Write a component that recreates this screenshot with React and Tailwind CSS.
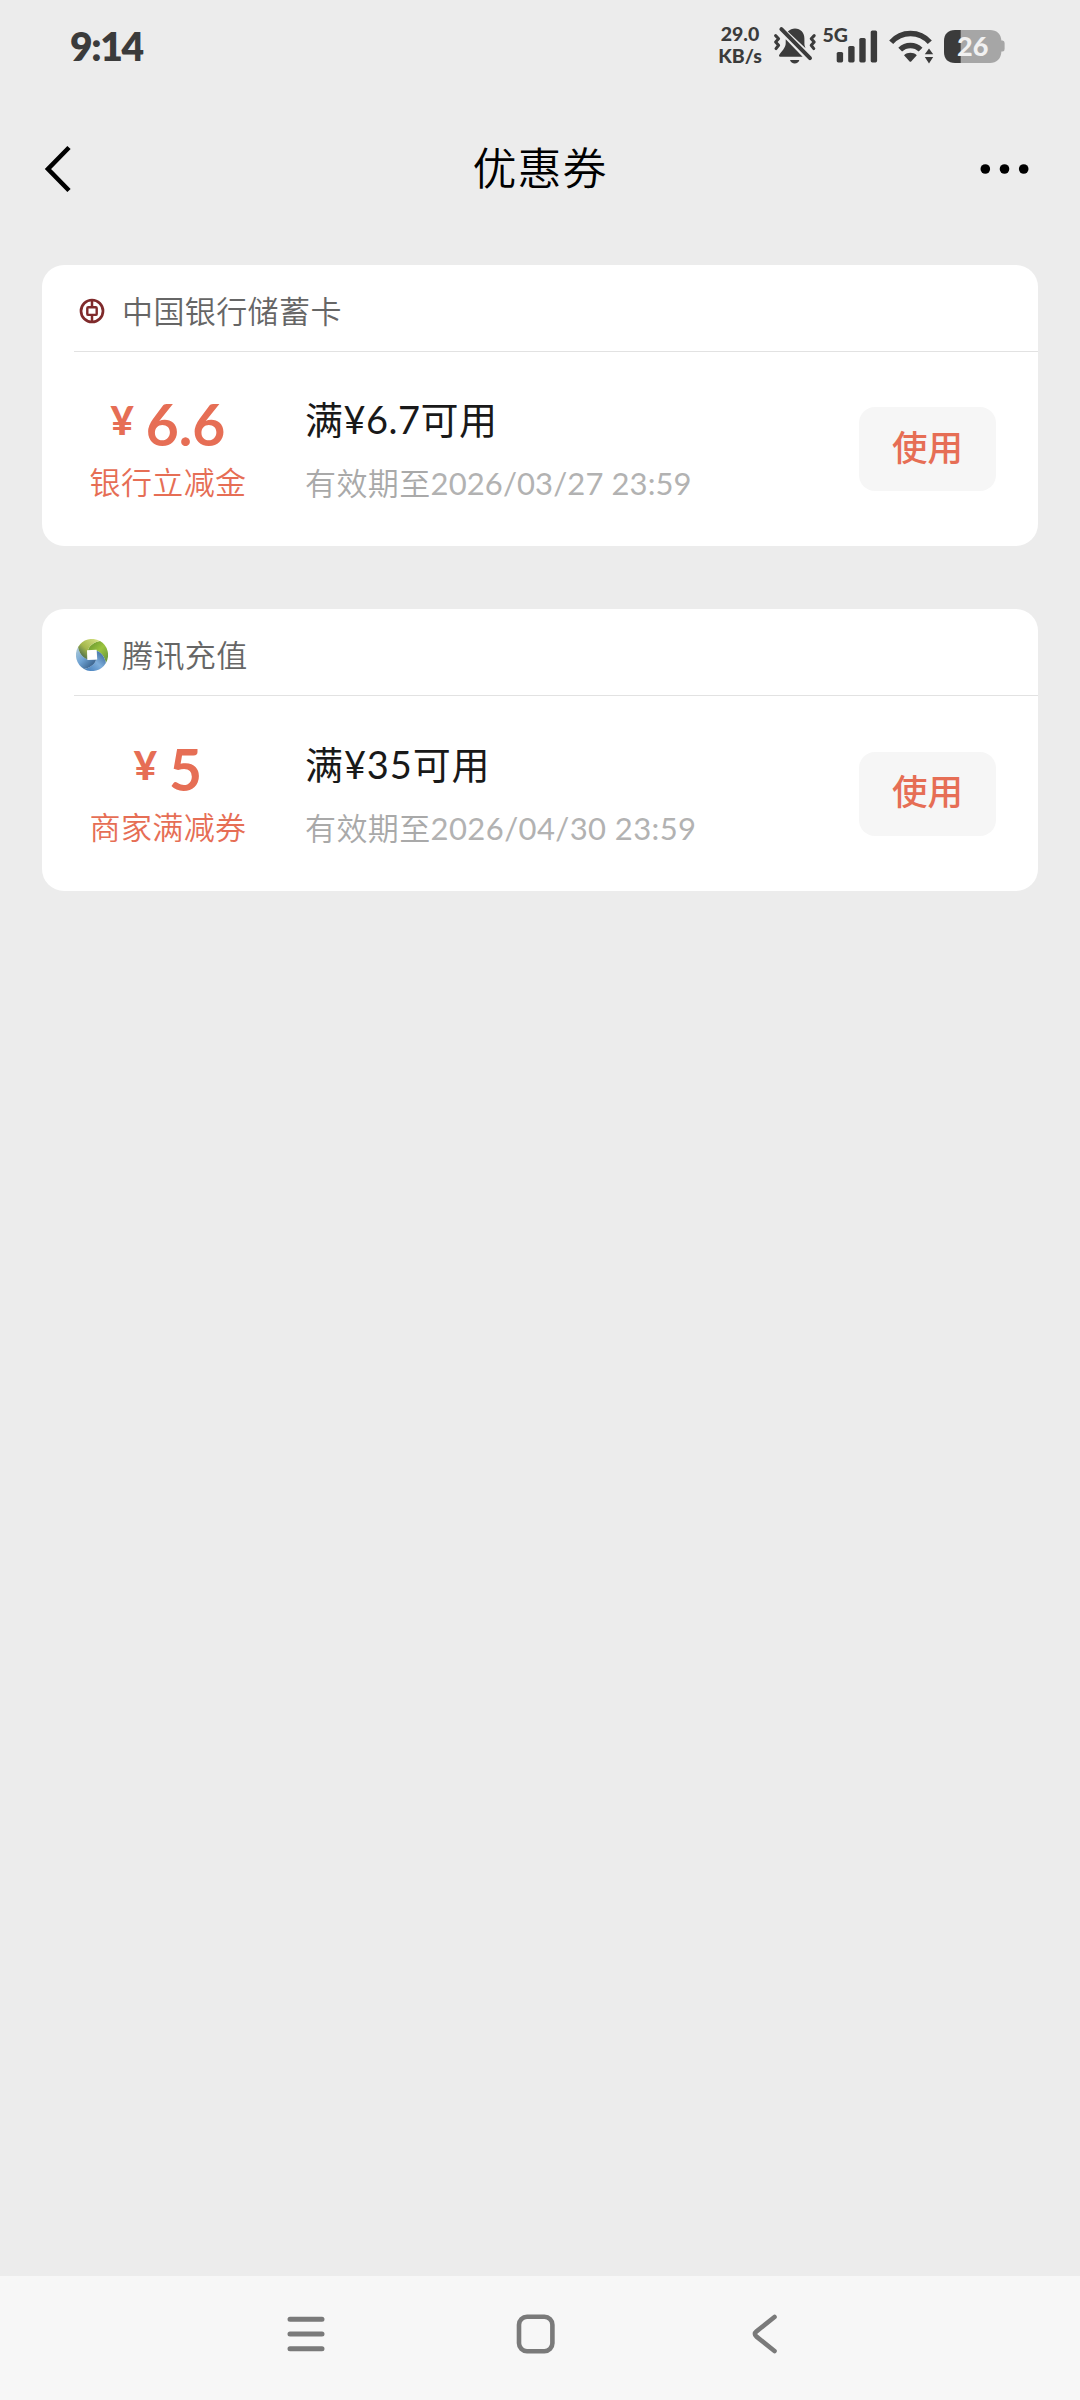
function BankIcon() {
  return (
    <svg className="h-8 w-8" viewBox="0 0 32 32" fill="none" stroke="#7f2a2b">
      <circle cx="16" cy="16" r="11" strokeWidth="2.7" />
      <rect x="11.3" y="12.3" width="9.4" height="7.6" rx="1" strokeWidth="2.4" />
      <path d="M16 5v7.3M16 19.9v7" strokeWidth="2.5" />
    </svg>
  );
}

function RechargeIcon() {
  const blade = "M-4.2-4.2C-3.2-9 2-13 8-13.9A16 16 0 0 1 13.9 8C13 2 9-3 4.2-4.2Z";
  return (
    <svg className="h-8 w-8" viewBox="-16 -16 32 32">
      <defs>
        <linearGradient id="leaf" x1="0" y1="0" x2="1" y2="1">
          <stop offset="0" stopColor="#5f8f2a" />
          <stop offset="0.5" stopColor="#9cc43f" />
          <stop offset="1" stopColor="#5d8f3a" />
        </linearGradient>
        <linearGradient id="sky" x1="0" y1="0" x2="1" y2="1">
          <stop offset="0" stopColor="#2c5a8c" />
          <stop offset="0.5" stopColor="#7eaedb" />
          <stop offset="1" stopColor="#3c78b8" />
        </linearGradient>
        <linearGradient id="deep" x1="0" y1="0" x2="1" y2="1">
          <stop offset="0" stopColor="#24486f" />
          <stop offset="0.55" stopColor="#6fa3d4" />
          <stop offset="1" stopColor="#b4cfd8" />
        </linearGradient>
        <linearGradient id="lime" x1="0" y1="0" x2="1" y2="1">
          <stop offset="0" stopColor="#234a4c" />
          <stop offset="0.45" stopColor="#a5b84c" />
          <stop offset="1" stopColor="#dbe68a" />
        </linearGradient>
      </defs>
      <path d={blade} fill="url(#leaf)" />
      <path d={blade} fill="url(#sky)" transform="rotate(90)" />
      <path d={blade} fill="url(#deep)" transform="rotate(180)" />
      <path d={blade} fill="url(#lime)" transform="rotate(270)" />
      <path d="M-5-4.8L4.6-5.2L5.2 4.4L-4.6 5Z" fill="#fff" />
    </svg>
  );
}

const coupons = [
  {
    icon: BankIcon,
    source: "中国银行储蓄卡",
    amount: "6.6",
    kind: "银行立减金",
    title: "满¥6.7可用",
    expiry: "2026/03/27 23:59",
    size: "h-[281px]",
    titleSpacing: "tracking-[0.5px]",
    dateSpacing: "tracking-[0.1px]",
  },
  {
    icon: RechargeIcon,
    source: "腾讯充值",
    amount: "5",
    kind: "商家满减券",
    title: "满¥35可用",
    expiry: "2026/04/30 23:59",
    size: "h-[282px]",
    titleSpacing: "tracking-[0.9px]",
    dateSpacing: "tracking-[0.4px]",
  },
];

function Coupon({ icon: Icon, source, amount, kind, title, expiry, size, titleSpacing, dateSpacing }) {
  return (
    <section className={`flex flex-col rounded-[22px] bg-white ${size}`}>
      <header className="ml-8 flex h-[87px] items-center border-b-[1.5px] border-[#e2e2e2] pl-0.5 pt-1.5">
        <Icon />
        <span className="ml-3.5 text-[31px] font-[350] leading-10 tracking-[0.4px] text-[#666666]">{source}</span>
      </header>
      <div className="flex flex-1 items-center pr-[42px]">
        <div className="flex w-[252px] flex-col items-center text-[#e66e55]">
          <div className="flex h-[66px] items-start font-bold">
            <span className="mr-3 text-[40px] font-black leading-[48px]">¥</span>
            <span className="text-[57px] leading-[56px]">{amount}</span>
          </div>
          <span className="text-[31px] font-[350] leading-10 tracking-[0.4px]">{kind}</span>
        </div>
        <div className="ml-[11px] flex flex-1 flex-col">
          <span className={`text-[38px] leading-[54px] text-[#191919] ${titleSpacing}`}>{title}</span>
          <span className="mt-[14px] text-[31px] leading-[46px] tracking-[0.4px] text-[#b2b2b2]">
            <span className="font-[350] text-[#a9a9a9]">有效期至</span>
            <span className={dateSpacing}>{expiry}</span>
          </span>
        </div>
        <button className="h-[84px] w-[137px] rounded-2xl bg-[#f6f6f6] pb-[3px] text-[35.5px] font-medium text-[#e66e55]">
          使用
        </button>
      </div>
    </section>
  );
}

function StatusIcons() {
  return (
    <svg width="236" height="52" viewBox="770 19 236 52" fill="#3b3b3b">
      {/* muted bell */}
      <path d="M787.8 30.6C790 28.6 792.4 27.6 795 27.6C800.6 27.6 804.4 31.8 804.4 37.5V42.6C804.4 44.3 804.8 45.6 805.6 47.2Z" />
      <path d="M785.7 38.2L802.6 55.8H780.4C778.8 55.8 778.6 54.4 779.6 53.2C783.4 48.6 785.7 45.6 785.7 42.2Z" />
      <path d="M790 59H799.4C798.8 61.2 797 62.4 794.7 62.4S790.6 61.2 790 59Z" />
      <path d="M781.4 28.2L810 57.2" stroke="#3b3b3b" strokeWidth="4" strokeLinecap="round" />
      <path d="M775.6 34.6L778.6 37.8L775.6 41L778.6 44.3L776 47.6M814.2 34.6L811.2 37.8L814.2 41L811.2 44.3L813.8 47.6" fill="none" stroke="#3b3b3b" strokeWidth="3" strokeLinecap="round" strokeLinejoin="round" />
      {/* cellular */}
      <text x="822.4" y="40.8" fontSize="19.5" fontWeight="900">5G</text>
      <rect x="836.7" y="51" width="6.4" height="10.4" rx="1.6" />
      <rect x="848.2" y="45" width="6.4" height="16.4" rx="1.6" />
      <rect x="859.3" y="37" width="6.4" height="24.4" rx="1.6" />
      <rect x="870.7" y="29.4" width="6.4" height="32" rx="1.6" />
      {/* wifi */}
      <path d="M891.2 41.3A25.6 25.6 0 0 1 929.8 41.3M900.2 48.6A14.6 14.6 0 0 1 920.6 48.6" fill="none" stroke="#3b3b3b" strokeWidth="5.4" />
      <path d="M904 54.2C907.6 51 913.2 51 916.8 54.2L911.4 60.2Q910.4 61.2 909.4 60.2Z" />
      <path d="M929 47.4L933.2 53.2H924.8ZM929 62.6L933.2 56H924.8Z" />
      {/* battery */}
      <path d="M955 29H990C996.6 29 1001 33 1001.4 39.5H1002.5Q1004.6 39.5 1004.6 42V48Q1004.6 50.5 1002.5 50.5H1001.4C1001 58 996.6 62 990 62H955Z" fill="#a6a6a6" />
      <path d="M960.7 29V62H955C948 62 944 58 944 51V40C944 33 948 29 955 29Z" />
      <text x="957" y="55.4" fontSize="27" fontWeight="900" fill="#f1f1f1">26</text>
    </svg>
  );
}

function StatusBar() {
  return (
    <div className="flex h-[92px] items-center pl-[70px] pr-[74px] text-[#3b3b3b]">
      <span className="text-[39px] font-extrabold tracking-[-1.4px]">9:14</span>
      <div className="ml-auto flex h-[52px] items-center">
        <div className="mr-[7px] flex w-[46px] flex-col items-center pb-[3px] text-[19.5px] font-black leading-[22px]">
          <span>29.0</span>
          <span>KB/s</span>
        </div>
        <StatusIcons />
      </div>
    </div>
  );
}

export default function App() {
  return (
    <div className="flex h-[2400px] w-[1080px] flex-col bg-[#ececec] font-[Lato,'Noto_Sans_CJK_SC',sans-serif] font-normal">
      <StatusBar />
      <nav className="flex h-[153px] items-center justify-between px-[42px] text-black">
        <svg width="60" height="52" viewBox="0 0 60 52" fill="none" stroke="currentColor" strokeWidth="4.6">
          <path d="M27 4.5L6 26L27 47.5" />
        </svg>
        <h1 className="pb-[2px] text-[44px] font-[350] tracking-[1px]">优惠券</h1>
        <svg width="60" height="12" viewBox="0 0 60 12">
          <circle cx="7.3" cy="6" r="4.8" />
          <circle cx="26.5" cy="6" r="4.8" />
          <circle cx="45.7" cy="6" r="4.8" />
        </svg>
      </nav>
      <main className="mt-5 flex flex-1 flex-col gap-[63px] px-[42px]">
        {coupons.map((c) => (
          <Coupon key={c.source} {...c} />
        ))}
      </main>
      <footer className="flex h-[124px] items-center justify-center gap-[185px] bg-[#f7f7f7] pb-2 pr-2.5 text-[#7a7a7a]">
        <svg width="44" height="44" viewBox="0 0 44 44" fill="none" stroke="currentColor" strokeWidth="5" strokeLinecap="round">
          <path d="M6 7.3H38M6 22H38M6 36.7H38" />
        </svg>
        <svg width="44" height="44" viewBox="0 0 44 44" fill="none" stroke="currentColor" strokeWidth="4.6">
          <rect x="6" y="4.8" width="33.4" height="34.4" rx="8" />
        </svg>
        <svg width="44" height="44" viewBox="0 0 44 44" fill="none" stroke="currentColor" strokeWidth="4.6" strokeLinecap="round">
          <path d="M32.5 5L14.5 19.4Q11.3 22 14.5 24.6L32.5 39" />
        </svg>
      </footer>
    </div>
  );
}
